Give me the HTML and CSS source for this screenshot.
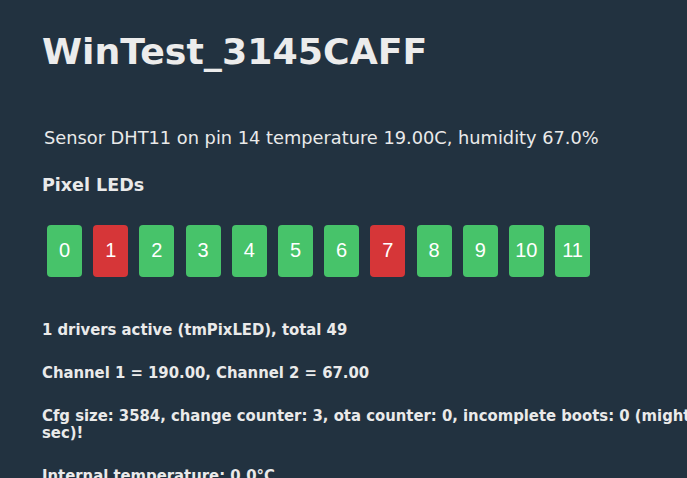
FILE: index.html
```html
<!DOCTYPE html>
<html lang="en">
<head>
  <meta charset="UTF-8" />
  <meta name="viewport" content="width=device-width, initial-scale=1" />
  <title>WinTest_3145CAFF</title>
  <link rel="stylesheet" href="styles.css">
</head>
<body>
  <div class="page">
    <h1 class="title">WinTest_3145CAFF</h1>

    <div class="sensor">Sensor DHT11 on pin 14 temperature 19.00C, humidity 67.0%</div>

    <h3 class="section">Pixel LEDs</h3>
    <div class="leds">
      <div class="led on">0</div>
      <div class="led off">1</div>
      <div class="led on">2</div>
      <div class="led on">3</div>
      <div class="led on">4</div>
      <div class="led on">5</div>
      <div class="led on">6</div>
      <div class="led off">7</div>
      <div class="led on">8</div>
      <div class="led on">9</div>
      <div class="led on">10</div>
      <div class="led on">11</div>
    </div>

    <!-- Status lines -->
    <div class="status">
      <p>1 drivers active (tmPixLED), total 49</p>
      <p>Channel 1 = 190.00, Channel 2 = 67.00</p>
      <p>Cfg size: 3584, change counter: 3, ota counter: 0, incomplete boots: 0 (might change to 0 if you wait to 30 sec)!</p>
      <p>Internal temperature: 0.0°C</p>
    </div>
  </div>
</body>
</html>
```

FILE: styles.css
```css
* { box-sizing: border-box; margin: 0; padding: 0; }
html, body {
  height: 100%;
  overflow: hidden;
}
body {
  background: #223240;
  color: #eaeaea;
  font-family: "DejaVu Sans", Verdana, sans-serif;
}

.page {
  width: 955px;
  padding: 30px 0 0 42px;
}

/* Heading */
.title {
  font-size: 36.3px;
  font-weight: bold;
  color: #ececec;
}

.sensor {
  margin-top: 54px;
  padding-left: 2px;
  font-size: 17.8px;
}

.section {
  margin-top: 26.5px;
  font-size: 17.5px;
  font-weight: bold;
}

/* LED buttons */
.leds {
  display: flex;
  gap: 11.2px;
  margin-top: 30px;
  padding-left: 5px;
}
.led {
  width: 35px;
  height: 52px;
  display: flex;
  justify-content: center;
  align-items: center;
  border-radius: 4px;
  color: #fff;
  font-family: "Liberation Sans", Arial, sans-serif;
  font-size: 20px;
}
.led.on { background: #47c36a; }
.led.off { background: #d63638; }

/* Status */
.status {
  margin-top: 44px;
  font-family: "DejaVu Sans Condensed", "DejaVu Sans", sans-serif;
  font-stretch: condensed;
  font-weight: bold;
  font-size: 16.5px;
  line-height: 17.5px;
}
.status p { margin-bottom: 25.5px; }
```
